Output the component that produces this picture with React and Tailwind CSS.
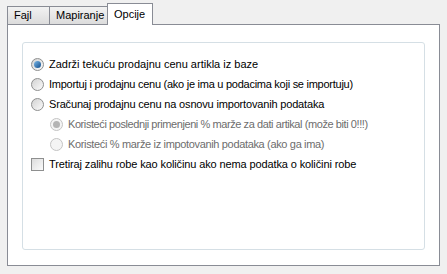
import React from "react";

const Radio = ({ checked, disabled }) => (
  <span
    className={`relative flex h-[13px] w-[13px] shrink-0 items-center justify-center rounded-full border ${
      disabled ? "border-[#c4c4c4] bg-[#f4f4f4]" : "border-[#8e8f8f] bg-gradient-to-br from-[#d2d2d2] to-[#fbfbfb]"
    }`}
  >
    {checked && (
      <span
        className={`h-[7px] w-[7px] rounded-full ${
          disabled ? "bg-[#b4b4b4]" : "bg-gradient-to-br from-[#7ab8e8] to-[#0f4d8a]"
        }`}
      />
    )}
  </span>
);

const Check = () => (
  <span className="h-[13px] w-[13px] shrink-0 border border-[#8e8f8f] bg-gradient-to-br from-[#dcdcdc] to-[#fbfbfb]" />
);

const Option = ({ checked, disabled, indent, tracking, children }) => (
  <div className={`flex h-[20px] items-center gap-[5px] ${indent ? "pl-[19px]" : ""}`}>
    <Radio checked={checked} disabled={disabled} />
    <span className={`${tracking} ${disabled ? "text-[#6d6d6d]" : "text-black"}`}>{children}</span>
  </div>
);

const App = () => {
  return (
    <div className="h-[274px] w-[447px] bg-[#f0f0f0] px-[7px] pt-[3px] font-['Liberation_Sans',sans-serif] text-[11px] leading-none">
      {/* Tabs */}
      <div className="flex h-[21px] items-end">
        <div className="flex h-[18px] w-[43px] items-center border border-b-0 border-[#898c95] bg-gradient-to-b from-[#f2f2f2] to-[#dcdcdc] pl-[6px]">
          Fajl
        </div>
        <div className="flex h-[18px] w-[58px] items-center border border-b-0 border-l-0 border-[#898c95] bg-gradient-to-b from-[#f2f2f2] to-[#dcdcdc] pl-[6px]">
          Mapiranje
        </div>
        <div className="relative z-10 -mb-px -ml-px flex h-[22px] w-[46px] items-center border border-b-0 border-[#898c95] bg-white pl-[6px]">
          Opcije
        </div>
      </div>

      {/* Panel */}
      <div className="h-[242px] w-[433px] border border-[#898c95] bg-white px-[14px] pt-[17px]">
        <div className="h-[208px] rounded-[3px] border border-[#d5dfe5] px-[8px] pt-[11px]">
          <Option checked tracking="tracking-normal">
            Zadrži tekuću prodajnu cenu artikla iz baze
          </Option>
          <Option tracking="tracking-[-0.26px]">
            Importuj i prodajnu cenu (ako je ima u podacima koji se importuju)
          </Option>
          <Option tracking="tracking-[-0.17px]">
            Sračunaj prodajnu cenu na osnovu importovanih podataka
          </Option>
          <Option indent checked disabled tracking="tracking-[-0.42px]">
            Koristeći poslednji primenjeni % marže za dati artikal (može biti 0!!!)
          </Option>
          <Option indent disabled tracking="tracking-[-0.34px]">
            Koristeći % marže iz impotovanih podataka (ako ga ima)
          </Option>
          <div className="flex h-[20px] items-center gap-[5px]">
            <Check />
            <span className="tracking-[-0.12px]">
              Tretiraj zalihu robe kao količinu ako nema podatka o količini robe
            </span>
          </div>
        </div>
      </div>
    </div>
  );
};

export default App;
